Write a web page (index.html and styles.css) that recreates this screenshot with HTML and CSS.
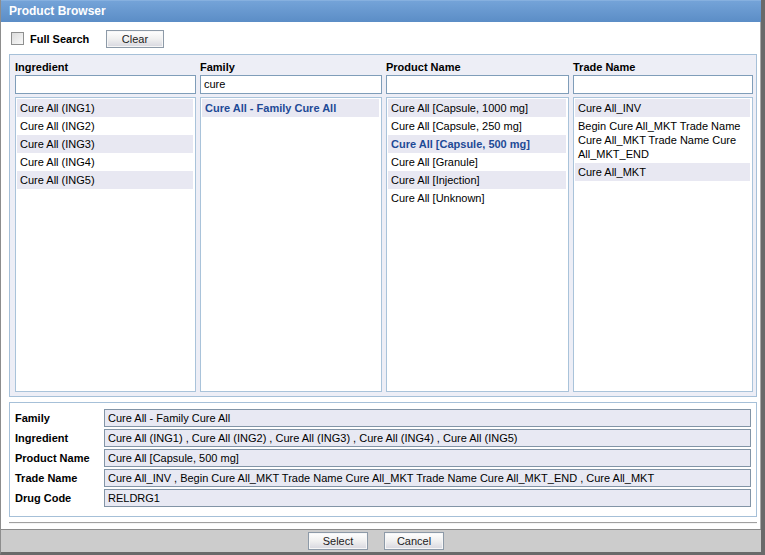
FILE: index.html
```html
<!DOCTYPE html>
<html>
<head>
<meta charset="utf-8">
<title>Product Browser</title>
<link rel="stylesheet" href="styles.css">
</head>
<body>
<div class="window">
  <div class="titlebar">Product Browser</div>
  <div class="content">
    <div class="toolbar">
      <span class="checkbox"></span>
      <span class="cb-label">Full Search</span>
      <button class="btn btn-clear">Clear</button>
    </div>

    <div class="search-panel">
      <div class="col">
        <div class="col-head">Ingredient</div>
        <div class="input"></div>
        <div class="list">
          <div class="item">Cure All (ING1)</div>
          <div class="item">Cure All (ING2)</div>
          <div class="item">Cure All (ING3)</div>
          <div class="item">Cure All (ING4)</div>
          <div class="item">Cure All (ING5)</div>
        </div>
      </div>
      <div class="col">
        <div class="col-head">Family</div>
        <div class="input">cure</div>
        <div class="list">
          <div class="item sel">Cure All - Family Cure All</div>
        </div>
      </div>
      <div class="col">
        <div class="col-head">Product Name</div>
        <div class="input"></div>
        <div class="list">
          <div class="item">Cure All [Capsule, 1000 mg]</div>
          <div class="item">Cure All [Capsule, 250 mg]</div>
          <div class="item sel">Cure All [Capsule, 500 mg]</div>
          <div class="item">Cure All [Granule]</div>
          <div class="item">Cure All [Injection]</div>
          <div class="item">Cure All [Unknown]</div>
        </div>
      </div>
      <div class="col">
        <div class="col-head">Trade Name</div>
        <div class="input"></div>
        <div class="list">
          <div class="item">Cure All_INV</div>
          <div class="item multi">Begin Cure All_MKT Trade Name Cure All_MKT Trade Name Cure All_MKT_END</div>
          <div class="item">Cure All_MKT</div>
        </div>
      </div>
    </div>

    <div class="details-panel">
      <div class="row"><span class="lbl">Family</span><span class="field">Cure All - Family Cure All</span></div>
      <div class="row"><span class="lbl">Ingredient</span><span class="field">Cure All (ING1) , Cure All (ING2) , Cure All (ING3) , Cure All (ING4) , Cure All (ING5)</span></div>
      <div class="row"><span class="lbl">Product Name</span><span class="field">Cure All [Capsule, 500 mg]</span></div>
      <div class="row"><span class="lbl">Trade Name</span><span class="field">Cure All_INV , Begin Cure All_MKT Trade Name Cure All_MKT Trade Name Cure All_MKT_END , Cure All_MKT</span></div>
      <div class="row"><span class="lbl">Drug Code</span><span class="field">RELDRG1</span></div>
    </div>

    <div class="separator"></div>
  </div>
  <div class="footer">
    <button class="btn btn-foot">Select</button>
    <button class="btn btn-foot">Cancel</button>
  </div>
</div>
</body>
</html>
```

FILE: styles.css
```css
* { box-sizing: border-box; }

html, body {
  margin: 0;
  padding: 0;
  background: #ffffff;
}

body {
  font-family: "Liberation Sans", Arial, sans-serif;
  font-size: 11px;
  color: #000;
}

.window {
  width: 765px;
  height: 555px;
  display: flex;
  flex-direction: column;
  background: #ffffff;
  border-left: 1px solid #8d8d8d;
  border-right: 4px solid #6a6a6a;
  border-bottom: 3px solid #6a6a6a;
  box-shadow: inset -1px 0 0 #a8a8a8;
}

.titlebar {
  height: 22px;
  flex: none;
  background: linear-gradient(#74a3d8, #5b8dc6);
  border-top: 1px solid #86b0df;
  color: #ffffff;
  font-weight: bold;
  font-size: 12px;
  line-height: 20px;
  padding-left: 8px;
}

.content {
  flex: 1;
  padding: 0 4px 0 8px;
  display: flex;
  flex-direction: column;
}

.toolbar {
  height: 32px;
  display: flex;
  align-items: center;
  padding-left: 2px;
  padding-top: 1px;
}

.checkbox {
  width: 13px;
  height: 13px;
  border: 1px solid #8e8f8f;
  background: linear-gradient(135deg, #dcdcdc, #f8f8f8);
  display: inline-block;
}

.cb-label {
  font-weight: bold;
  margin-left: 6px;
  width: 76px;
}

.btn {
  font-family: "Liberation Sans", Arial, sans-serif;
  font-size: 11px;
  color: #222;
  border: 1px solid #8d9aa8;
  background: linear-gradient(#ffffff 0%, #f0f0f0 50%, #d7d7df 100%);
  padding: 0;
  height: 18px;
  line-height: 16px;
  box-shadow: inset 0 0 0 1px #f6f6f6;
}

.btn-clear {
  width: 58px;
  margin-top: 1px;
}

.search-panel {
  height: 343px;
  border: 1px solid #a6c0d8;
  background: #edeef6;
  padding: 5px 0 4px 5px;
  display: grid;
  grid-template-columns: 181px 182px 183px 180px;
  column-gap: 4px;
}

.col {
  display: flex;
  flex-direction: column;
}

.col-head {
  font-weight: bold;
  height: 15px;
  line-height: 14px;
}

.input {
  height: 19px;
  border: 1px solid #7f9db9;
  background: #ffffff;
  line-height: 17px;
  padding-left: 3px;
}

.list {
  margin-top: 3px;
  flex: 1;
  border: 1px solid #a9c3da;
  background: #ffffff;
  padding: 1px 2px 1px 1px;
}

.item {
  height: 18px;
  line-height: 18px;
  padding-left: 3px;
  white-space: nowrap;
}

.item:nth-child(odd) {
  background: #e8e8f2;
}

.item.sel {
  color: #1e4a96;
  font-weight: bold;
}

.item.multi {
  height: auto;
  white-space: normal;
  line-height: 14px;
  padding-top: 2px;
  padding-bottom: 2px;
  padding-right: 8px;
}

.details-panel {
  margin-top: 5px;
  height: 115px;
  border: 1px solid #a6c0d8;
  padding: 6px 5px 0 5px;
  display: flex;
  flex-direction: column;
  row-gap: 2px;
}

.row {
  display: flex;
  align-items: center;
  height: 18px;
}

.lbl {
  width: 89px;
  font-weight: bold;
  flex: none;
}

.field {
  flex: 1;
  height: 18px;
  border: 1px solid #8294a6;
  background: #e8e9f3;
  line-height: 16px;
  padding-left: 3px;
  white-space: nowrap;
  overflow: hidden;
}

.separator {
  margin-top: 5px;
  height: 2px;
  border-top: 1px solid #a0a0a0;
  border-bottom: 1px solid #f4f4f4;
}

.footer {
  flex: none;
  height: 23px;
  background: #cccccc;
  border-top: 1px solid #8a8a8a;
  display: flex;
  justify-content: center;
  align-items: center;
  column-gap: 16px;
  padding-right: 10px;
}

.btn-foot {
  width: 60px;
  height: 18px;
}
```
